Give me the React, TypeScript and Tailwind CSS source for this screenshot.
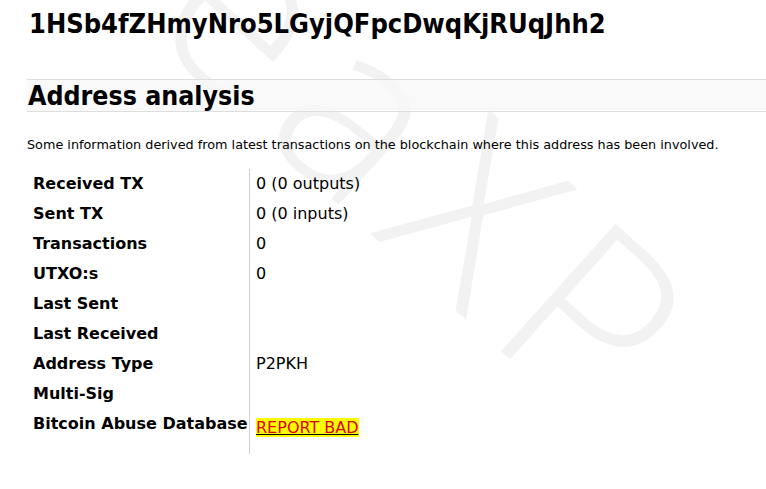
import React from "react";

const rows: [string, React.ReactNode][] = [
  ["Received TX", "0 (0 outputs)"],
  ["Sent TX", "0 (0 inputs)"],
  ["Transactions", "0"],
  ["UTXO:s", "0"],
  ["Last Sent", ""],
  ["Last Received", ""],
  ["Address Type", "P2PKH"],
  ["Multi-Sig", ""],
];

export default function App() {
  return (
    <div className="relative w-[766px] h-[489px] overflow-hidden bg-white text-black" style={{ fontFamily: '"DejaVu Sans", Verdana, sans-serif' }}>
      {/* watermark */}
      <div aria-hidden="true" className="pointer-events-none absolute left-[286px] top-[-129px] z-0 origin-top-left rotate-[42deg] whitespace-nowrap text-[240px] leading-none font-light tracking-[23px] text-[#f2f2f2]" style={{ fontFamily: '"Open Sans", sans-serif' }}>
        eaXP
      </div>
      <div className="relative z-10">
        <h1 className="pl-[29px] pt-[8px] text-[27px] font-bold leading-[32px]" style={{ fontFamily: '"DejaVu Sans Condensed", "DejaVu Sans", sans-serif' }}>1HSb4fZHmyNro5LGyjQFpcDwqKjRUqJhh2</h1>
        <div className="ml-[27px] mt-[39px] h-[33px] border-y border-[#dedede] bg-[#f8f8f8]/80">
          <h2 className="pl-[1px] text-[26.5px] font-bold leading-[31px]" style={{ fontFamily: '"DejaVu Sans Condensed", "DejaVu Sans", sans-serif' }}>Address analysis</h2>
        </div>
        <p className="ml-[27px] mt-[25px] text-[12.8px] leading-[16px]">Some information derived from latest transactions on the blockchain where this address has been involved.</p>
        <div className="ml-[28px] mt-[16px] w-[400px]">
          {rows.map(([k, v]) => (
            <div key={k} className="grid h-[30px] grid-cols-[221px_1fr] items-center">
              <div className="pl-[5px] text-[16px] font-bold">{k}</div>
              <div className="flex h-full items-center border-l border-[#cfcfcf] pl-[6px] text-[16px]">{v}</div>
            </div>
          ))}
          <div className="grid h-[45px] grid-cols-[221px_1fr]">
            <div className="pl-[5px] pt-[5px] text-[16px] font-bold leading-[20px]">Bitcoin Abuse Database</div>
            <div className="border-l border-[#cfcfcf] pl-[6px] pt-[7px]">
              <a href="#" className="bg-[#ffff00] text-[16px] leading-[18px] text-[#e00000] underline decoration-black">REPORT BAD</a>
            </div>
          </div>
        </div>
      </div>
    </div>
  );
}
